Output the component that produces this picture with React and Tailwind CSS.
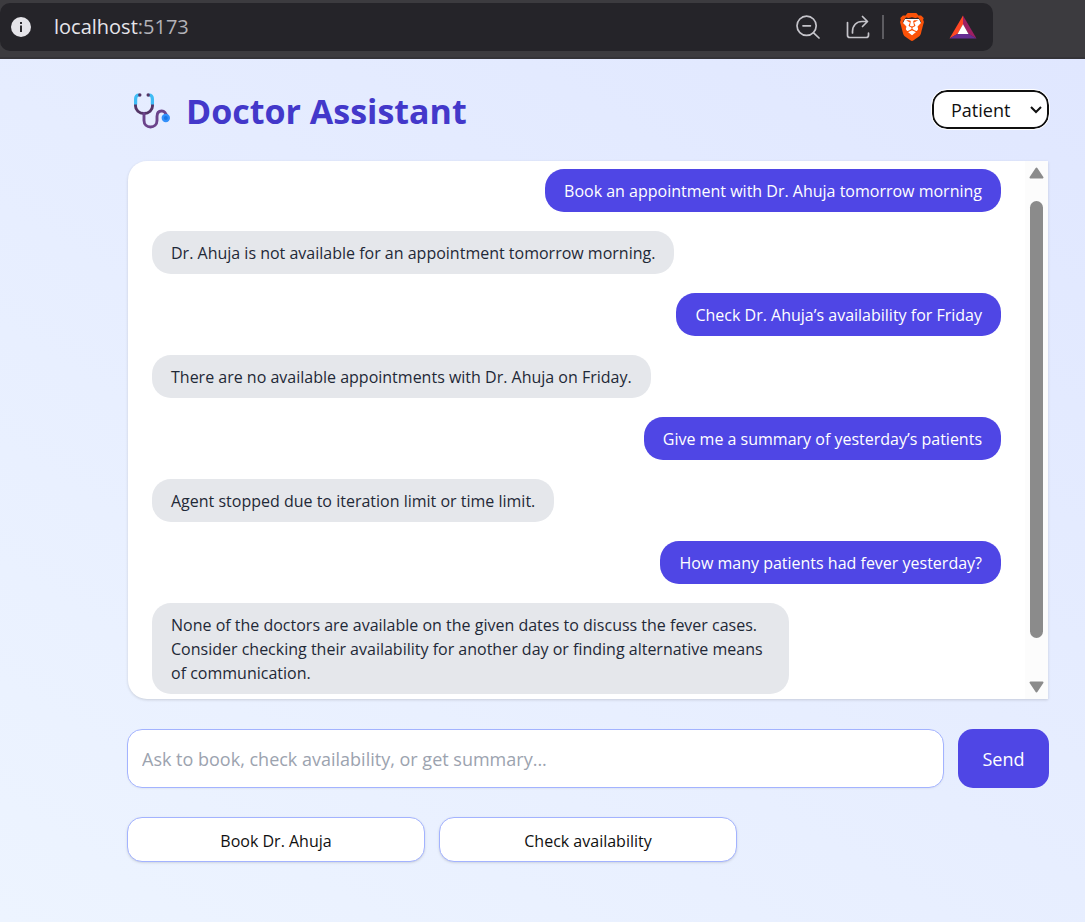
import { useState } from "react";
import { SiBrave } from "react-icons/si";

const messages = [
  { from: "user", text: "Book an appointment with Dr. Ahuja tomorrow morning" },
  { from: "agent", text: "Dr. Ahuja is not available for an appointment tomorrow morning." },
  { from: "user", text: "Check Dr. Ahuja’s availability for Friday" },
  { from: "agent", text: "There are no available appointments with Dr. Ahuja on Friday." },
  { from: "user", text: "Give me a summary of yesterday’s patients" },
  { from: "agent", text: "Agent stopped due to iteration limit or time limit." },
  { from: "user", text: "How many patients had fever yesterday?" },
  {
    from: "agent",
    text: "None of the doctors are available on the given dates to discuss the fever cases. Consider checking their availability for another day or finding alternative means of communication.",
  },
];

function InfoIcon() {
  return (
    <svg className="size-5" viewBox="0 0 20 20" aria-hidden="true">
      <circle cx="10" cy="10" r="10" fill="#e5e4e9" />
      <path d="M9 5h2v2H9zM9 8.5h2V15H9z" fill="#2a292e" />
    </svg>
  );
}

function ZoomOutIcon() {
  return (
    <svg className="size-6" viewBox="0 0 24 24" fill="none" stroke="#c5c4ca" strokeWidth="1.7" strokeLinecap="round" aria-hidden="true">
      <circle cx="10.6" cy="10.8" r="9.6" />
      <path d="M17.6 17.8 23 23M7 10.8h7.4" />
    </svg>
  );
}

function ShareIcon() {
  return (
    <svg className="size-6" viewBox="0 0 24 24" fill="none" stroke="#c5c4ca" strokeWidth="1.7" strokeLinecap="round" strokeLinejoin="round" aria-hidden="true">
      <path d="M1.500 7.500v12.700c0 1.600.7 2.300 2.300 2.300h16.400c1.600 0 2.300-.7 2.300-2.300v-2" />
      <path d="M6.500 18v-1.500c0-6 4-10 9.500-10H21M16.500 1.500l5 5-5 5" />
    </svg>
  );
}

function BraveIcon() {
  return (
    <span className="relative block size-7" aria-hidden="true">
      <svg className="absolute inset-0 size-7" viewBox="0 0 28 28">
        <path d="M7 6h14l2.500 5-5 9-4.500 3.500L9.500 20l-5-9z" fill="#fff" />
      </svg>
      <SiBrave className="absolute inset-0 size-7 text-[#fb5208]" />
    </span>
  );
}

function BatIcon() {
  return (
    <svg className="h-6 w-7" viewBox="0 0 28 24" aria-hidden="true">
      <path d="M14 .5v9L8.500 19 .5 23.500z" fill="#ff4724" />
      <path d="M14 .5v9l5.500 9.500 8 4.500z" fill="#9e1f63" />
      <path d="M.5 23.500h27L19.500 18.800h-11z" fill="#662d91" />
      <path d="M14 9.200 19.500 19h-11z" fill="#fff" />
    </svg>
  );
}

function Stethoscope() {
  return (
    <svg className="h-9 w-9 shrink-0" viewBox="0 0 36 36" fill="none" strokeLinecap="round" aria-hidden="true">
      <path d="M1.500 11v2c0 4 3.500 7.500 8.500 7.500s8.500-3.500 8.500-7.500v-2" stroke="#533566" strokeWidth="2.900" strokeLinecap="butt" />
      <path d="M10 20.500v7c0 4 3 6.500 6.500 6.500s6.500-2.500 6.500-6.500v-4c0-3.500 2-5.500 4.700-5.500 2.600 0 4.500 2 4.500 5" stroke="#6b438b" strokeWidth="2.900" />
      <path d="M1.600 11.500V6c0-2.500 1-4 3.500-4M18.400 11.500V6c0-2.500-1-4-3.500-4" stroke="#3ebcf5" strokeWidth="3.200" strokeLinecap="butt" />
      <circle cx="5.800" cy="2" r="1.700" fill="#533566" />
      <circle cx="14.200" cy="2" r="1.700" fill="#533566" />
      <circle cx="31.800" cy="25" r="4.200" fill="#3290fa" />
      <circle cx="31.800" cy="25" r="2" fill="#1877e8" />
    </svg>
  );
}

function BrowserBar() {
  return (
    <header className="flex h-[59px] border-b-2 border-[#343338] bg-[#3c3b3f] pt-[3px] pr-[92px]">
      <div className="flex h-12 flex-1 items-center rounded-[10px] bg-[#252429] pr-4 pl-[11px]">
        <InfoIcon />
        <p className="ml-[23px] flex-1 text-xl text-[#e6e5ea]">
          localhost<span className="text-[#b3b2b8]">:5173</span>
        </p>
        <button type="button" aria-label="Zoom"><ZoomOutIcon /></button>
        <button type="button" aria-label="Share" className="ml-[26px]"><ShareIcon /></button>
        <span className="ml-3 h-6 w-0.5 bg-[#5d5c61]" />
        <button type="button" aria-label="Brave Shields" className="ml-[14px]"><BraveIcon /></button>
        <button type="button" aria-label="Brave Rewards" className="ml-[23px]"><BatIcon /></button>
      </div>
    </header>
  );
}

function Message({ from, text }) {
  const tone =
    from === "user"
      ? "self-end bg-[#4f46e5] text-white"
      : "self-start bg-[#e5e7eb] text-[#1f2937]";
  return (
    <li className={`max-w-3/4 rounded-[19px] px-[19px] pt-[10px] pb-[9px] text-base leading-6 ${tone}`}>
      {text}
    </li>
  );
}

function ScrollBar() {
  return (
    <div className="flex w-[23px] flex-col items-center bg-[#fcfcfc] py-[6px]" aria-hidden="true">
      <svg className="h-3 w-[15px]" viewBox="0 0 15 12">
        <path d="M7.500 1.500 13.500 10.500h-12z" fill="#8b8b8b" stroke="#8b8b8b" strokeWidth="2" strokeLinejoin="round" />
      </svg>
      <div className="mt-[22px] mb-[43px] w-[13px] flex-1 rounded-full bg-[#8b8b8b]" />
      <svg className="h-3 w-[15px]" viewBox="0 0 15 12">
        <path d="M7.500 10.500 1.500 1.500h12z" fill="#8b8b8b" stroke="#8b8b8b" strokeWidth="2" strokeLinejoin="round" />
      </svg>
    </div>
  );
}

export default function App() {
  const [role, setRole] = useState("Patient");
  const [draft, setDraft] = useState("");

  return (
    <div className="flex min-h-screen flex-col font-['Open_Sans','Noto_Sans',sans-serif]">
      <BrowserBar />
      <main className="flex-1 bg-linear-[212deg] from-[#e0e7ff] to-[#edf4ff] pt-[31px] pr-9 pb-[59px] pl-[127px]">
        <div className="flex items-start justify-between">
          <h1 className="flex items-center gap-4 pt-px pl-[7px] text-[34px] leading-10 font-bold text-[#4338ca]">
            <Stethoscope />
            Doctor Assistant
          </h1>
          <div className="relative">
            <select
              aria-label="Role"
              value={role}
              onChange={(e) => setRole(e.target.value)}
              className="block h-[39px] w-[117px] appearance-none rounded-[15px] border-2 border-[#101010] bg-white pl-[17px] text-lg text-[#101010] outline-1 outline-white"
            >
              <option>Patient</option>
              <option>Doctor</option>
            </select>
            <svg className="pointer-events-none absolute top-4 right-[7px] h-2 w-3" viewBox="0 0 12 8" fill="none" stroke="#101010" strokeWidth="2" aria-hidden="true">
              <path d="m1 1 5 5 5-5" />
            </svg>
          </div>
        </div>

        <section className="mx-px mt-[30px] flex rounded-[19px] rounded-r-none bg-white shadow-[0_1px_3px_rgb(0_0_0/0.15)]">
          <ul className="flex flex-1 flex-col gap-[19px] pt-2 pr-6 pb-[5px] pl-6">
            {messages.map((m) => (
              <Message key={m.text} from={m.from} text={m.text} />
            ))}
          </ul>
          <ScrollBar />
        </section>

        <form className="mt-[30px] flex gap-[14px]" onSubmit={(e) => e.preventDefault()}>
          <input
            type="text"
            aria-label="Message"
            value={draft}
            onChange={(e) => setDraft(e.target.value)}
            placeholder="Ask to book, check availability, or get summary..."
            className="h-[59px] min-w-0 flex-1 rounded-[15px] border border-[#a3b3ff] bg-white px-[14px] text-lg shadow-xs placeholder:text-[#9ca3af]"
          />
          <button type="submit" className="w-[91px] rounded-[15px] bg-[#4f46e5] text-lg text-white">
            Send
          </button>
        </form>

        <div className="mt-[29px] grid grid-cols-3 gap-[14px]">
          {["Book Dr. Ahuja", "Check availability"].map((label) => (
            <button
              key={label}
              type="button"
              className="h-[45px] rounded-[15px] border border-[#a3b3ff] bg-white pt-0.5 text-base text-[#101010] shadow-sm"
            >
              {label}
            </button>
          ))}
        </div>
      </main>
    </div>
  );
}
